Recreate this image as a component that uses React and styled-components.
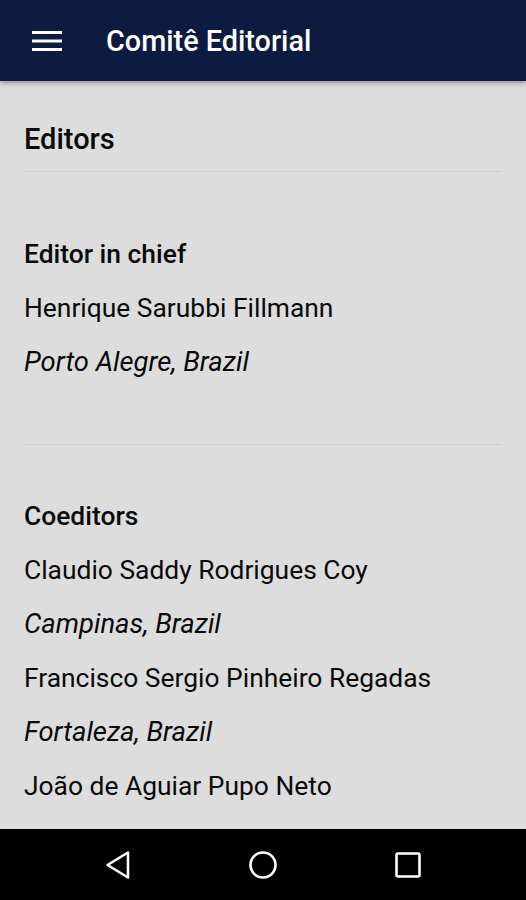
import React from 'react';
import styled, { createGlobalStyle } from 'styled-components';

const GlobalStyle = createGlobalStyle`
  html, body {
    margin: 0;
    padding: 0;
    background: #dddddd;
  }
  body {
    font-family: Roboto, "Noto Sans", sans-serif;
  }
`;

const sections = [
  {
    title: 'Editor in chief',
    people: [{ name: 'Henrique Sarubbi Fillmann', city: 'Porto Alegre, Brazil' }],
  },
  {
    title: 'Coeditors',
    people: [
      { name: 'Claudio Saddy Rodrigues Coy', city: 'Campinas, Brazil' },
      { name: 'Francisco Sergio Pinheiro Regadas', city: 'Fortaleza, Brazil' },
      { name: 'João de Aguiar Pupo Neto', city: 'Rio de Janeiro, Brazil' },
    ],
  },
];

const App = () => (
  <Screen>
    <GlobalStyle />
    <AppBar>
      <MenuButton aria-label="menu">
        <svg width="30" height="22" viewBox="0 0 30 22">
          <rect x="0" y="1" width="30" height="3" fill="#fff" />
          <rect x="0" y="9.5" width="30" height="3" fill="#fff" />
          <rect x="0" y="18" width="30" height="3" fill="#fff" />
        </svg>
      </MenuButton>
      <Title>Comitê Editorial</Title>
    </AppBar>
    <Content>
      <PageHeading>Editors</PageHeading>
      <Divider />
      {sections.map((section, i) => (
        <Section key={section.title} first={i === 0}>
          <SectionTitle>{section.title}</SectionTitle>
          {section.people.map(person => (
            <React.Fragment key={person.name}>
              <Row>{person.name}</Row>
              <Row italic>{person.city}</Row>
            </React.Fragment>
          ))}
          {i < sections.length - 1 && <Divider spaced />}
        </Section>
      ))}
    </Content>
    <NavBar>
      <NavButton aria-label="back">
        <svg width="28" height="30" viewBox="0 0 28 30">
          <path d="M24 2.5 L24 27.5 L3.5 15 Z" fill="none" stroke="#fff" strokeWidth="2.6" strokeLinejoin="round" />
        </svg>
      </NavButton>
      <NavButton aria-label="home">
        <svg width="30" height="30" viewBox="0 0 30 30">
          <circle cx="15" cy="15" r="12.5" fill="none" stroke="#fff" strokeWidth="2.6" />
        </svg>
      </NavButton>
      <NavButton aria-label="recents">
        <svg width="28" height="28" viewBox="0 0 28 28">
          <rect x="2.5" y="2.5" width="23" height="23" rx="1.5" fill="none" stroke="#fff" strokeWidth="2.6" />
        </svg>
      </NavButton>
    </NavBar>
  </Screen>
);

export default App;

const Screen = styled.div`
  width: 526px;
  height: 900px;
  display: flex;
  flex-direction: column;
  background: #dddddd;
  overflow: hidden;
`;

const AppBar = styled.header`
  flex: 0 0 81px;
  display: flex;
  align-items: center;
  background: #0e1b41;
  box-shadow: 0 2px 5px rgba(0, 0, 0, 0.35);
  position: relative;
  z-index: 1;
`;

const MenuButton = styled.div`
  width: 30px;
  height: 22px;
  margin-left: 32px;
  margin-right: 44px;
  display: flex;
`;

const Title = styled.h1`
  margin: 0;
  color: #ffffff;
  font-size: 28.8px;
  font-weight: 500;
  letter-spacing: 0;
`;

const Content = styled.main`
  flex: 1;
  overflow: hidden;
  padding: 31px 24px 0;
  color: #0a0a0a;
`;

const PageHeading = styled.h2`
  margin: 0;
  font-size: 29px;
  font-weight: 500;
  line-height: 54px;
`;

const Divider = styled.hr`
  border: none;
  height: 1px;
  background: #cbcbcb;
  margin: ${props => (props.spaced ? '55px 0 44px' : '5px 0 0')};
`;

const Section = styled.section`
  margin-top: ${props => (props.first ? '55px' : '0')};
`;

const SectionTitle = styled.h3`
  margin: 0;
  font-size: 26.4px;
  font-weight: 500;
  line-height: 54px;
`;

const Row = styled.p`
  margin: 0;
  font-size: ${props => (props.italic ? '27.4px' : '26.4px')};
  line-height: 54px;
  font-style: ${props => (props.italic ? 'italic' : 'normal')};
  white-space: nowrap;
`;

const NavBar = styled.nav`
  flex: 0 0 71px;
  display: flex;
  align-items: center;
  justify-content: center;
  gap: 105px;
  background: #000000;
`;

const NavButton = styled.div`
  width: 40px;
  height: 40px;
  display: flex;
  align-items: center;
  justify-content: center;
`;
